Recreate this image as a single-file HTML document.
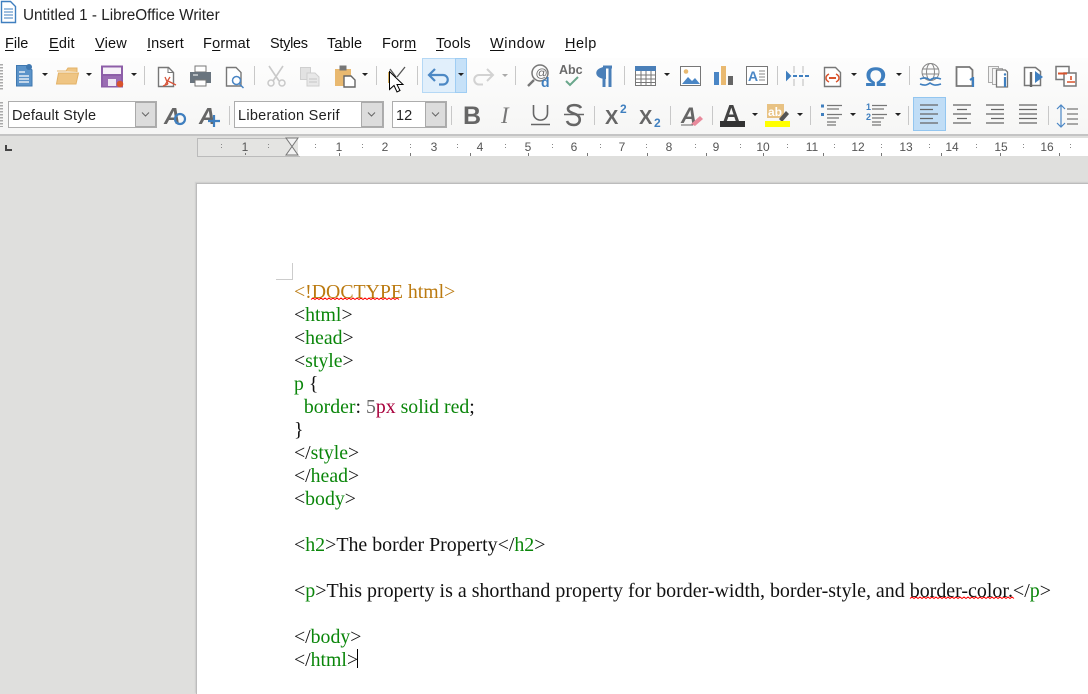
<!DOCTYPE html>
<html><head><meta charset="utf-8">
<style>
html,body{margin:0;padding:0}
body{width:1088px;height:693px;overflow:hidden;position:relative;background:#dfdfdd;font-family:"Liberation Sans",sans-serif}
.a{position:absolute;white-space:pre}
.m{position:absolute;top:35px;font-size:14.5px;line-height:18px;color:#111;white-space:pre}
.m u{text-underline-offset:2px}
.l{position:absolute;left:294px;font:19.8px/23px "Liberation Serif",serif;color:#111;white-space:pre}
.g{color:#0a860a}.o{color:#bb7a10}.c{color:#a8003c}.y{color:#666}
.r{position:absolute;top:140px;font-size:12px;line-height:14px;color:#555;width:24px;text-align:center}
</style></head><body>
<div class="a" style="left:0;top:0;width:1088px;height:134px;background:#fff"></div>
<div class="a" style="left:0;top:58px;width:1088px;height:76px;background:linear-gradient(#fdfdfd,#f6f6f5)"></div>
<div class="a" style="left:0;top:134px;width:1088px;height:2px;background:#c4c4c4"></div>
<div class="a" style="left:197px;top:138px;width:101px;height:17px;background:#e4e4e2;border:1px solid #bbb;box-sizing:content-box"></div>
<div class="a" style="left:298px;top:138px;width:790px;height:18px;background:#fff"></div>
<div class="a" style="left:196px;top:183px;width:892px;height:510px;background:#fff;border-left:1px solid #bcbcbc;border-top:1px solid #bcbcbc;box-shadow:-1px -1px 1px #ccc"></div>

<svg class="a" style="left:0;top:0" width="1088" height="693" viewBox="0 0 1088 693" fill="none">
<!-- title icon -->
<path d="M1.500 1.500h9l5 5v16h-14z" fill="#fff" stroke="#3f7fbf" stroke-width="1.400"/><path d="M4 9h9M4 12h9M4 15h9M4 18h9" stroke="#3f7fbf"/>
<!-- grips -->
<path d="M1.500 64v26M1.500 102v25" stroke="#aaa" stroke-width="3" stroke-dasharray="1.500 1.500"/>
<!-- separators -->
<g stroke="#c8c8c8"><path d="M144.500 66v19M254.500 66v19M376.500 66v19M417.500 66v19M515.500 66v19M624.500 66v19M777.500 66v19M909.500 66v19M229.500 106v19M451.500 106v19M594.500 106v19M670.500 106v19M712.500 106v19M810.500 106v19M908.500 106v19M1048.500 106v19"/></g>
<!-- arrows -->
<g fill="#222"><path d="M42 73h6l-3 3zM86 73h6l-3 3zM131 73h6l-3 3zM362 73h6l-3 3zM664 73h6l-3 3zM851 73h6l-3 3zM896 73h6l-3 3zM752 113h6l-3 3zM797 113h6l-3 3zM850 113h6l-3 3zM895 113h6l-3 3z"/></g>
<path d="M502 74h6l-3 3z" fill="#aaa"/>
<!-- new doc -->
<path d="M16.500 65.500h11l4.500 4.500v16h-15.500z" fill="#5b93c9" stroke="#3f78b0"/><circle cx="29" cy="67" r="3" fill="#3f78b0"/><path d="M19 72h6M19 76h10M19 79h10M19 82h10" stroke="#fff" stroke-width="1.300"/>
<!-- open -->
<path d="M57 71h9l2-3h9v4M56.500 84l2-11h20l-2.500 11z" fill="#efc583" stroke="#e3b267"/>
<!-- save -->
<path d="M102 66.500h20v20h-20z" fill="#f6f1f8" stroke="#8d5ea8" stroke-width="2"/><path d="M103 74h18v2h-18z" fill="#8d5ea8"/><path d="M103 76h18v10h-18z" fill="#9a6cb3"/><path d="M108 79h8v7h-8z" fill="#efe8f3"/><circle cx="120" cy="84" r="3.300" fill="#d9532c"/>
<!-- pdf -->
<path d="M158.500 67.500h10l5 5v14h-15z" fill="#fff" stroke="#777" stroke-width="1.400"/><path d="M168 67.500v5h5" stroke="#777"/><path d="M165 77l3 7M168 84l-5 2M168 81l8 4M170 77l-5 8" stroke="#d8553a" stroke-width="1.300"/>
<!-- print -->
<path d="M195 66h11v6h-11z" fill="#fff" stroke="#777"/><path d="M190 72h21v11h-21z" fill="#69747e" /><path d="M195 80h11v6h-11z" fill="#fff" stroke="#777"/><path d="M193 75h5" stroke="#fff"/>
<!-- preview -->
<path d="M226.500 67.500h9.500l5 5v13.500h-14.500z" fill="#fff" stroke="#777" stroke-width="1.400"/><circle cx="236.500" cy="80.500" r="4" fill="#fff" stroke="#4a86c5" stroke-width="1.500"/><path d="M239.500 84l4 4" stroke="#4a86c5" stroke-width="1.500"/>
<!-- cut -->
<path d="M269 66l10 15M283 66l-10 15" stroke="#c9c9c9" stroke-width="1.600"/><circle cx="271" cy="83" r="3" stroke="#c9c9c9" stroke-width="1.500"/><circle cx="282" cy="83" r="3" stroke="#c9c9c9" stroke-width="1.500"/>
<!-- copy -->
<path d="M300.500 67.500h10v12h-10z" fill="#e2e2e2" stroke="#cfcfcf"/><path d="M307 73h8l4 4v9h-12z" fill="#e8e8e8" stroke="#cfcfcf"/><path d="M309 79h8M309 82h8" stroke="#c6c6c6"/>
<!-- paste -->
<path d="M335 69h16v17h-16z" fill="#e9b970"/><path d="M340 66h6v4h-6z" fill="#777" stroke="#777"/><path d="M344 76h7l4 4v7h-11z" fill="#fff" stroke="#666" stroke-width="1.400"/>
<!-- clone brush under cursor -->
<path d="M390 69l6 8M405 67l-8 10" stroke="#555" stroke-width="1.300"/><path d="M389 72v11" stroke="#d8b060" stroke-width="2"/>
<!-- undo highlight -->
<rect x="422.500" y="58.500" width="44" height="34" fill="#e1effb" stroke="#b5d8f5"/><rect x="455.500" y="58.500" width="11" height="34" fill="#c6e1f8" stroke="#9fcdf3"/>
<path d="M458 73h6l-3 3z" fill="#222"/>
<path d="M429 75h14a4.750 4.750 0 0 1 0 9.500h-4M435 69l-6 6 6 6" stroke="#4c88c4" stroke-width="2.200"/>
<path d="M493 75h-14a4.750 4.750 0 0 0 0 9.500h4M487 69l6 6-6 6" stroke="#d2d2d2" stroke-width="2"/>
<!-- find -->
<circle cx="540" cy="73" r="8" stroke="#777" stroke-width="1.500"/><path d="M534 80l-6 6" stroke="#777" stroke-width="2.400"/><text x="535.500" y="77" font-size="12" fill="#666" font-family="Liberation Sans">@</text><text x="541" y="87" font-size="14" font-weight="bold" fill="#3f7fbf" font-family="Liberation Sans">d</text>
<!-- abc -->
<text x="559" y="74" font-size="12.500" font-weight="bold" fill="#6a6a6a" font-family="Liberation Sans">Abc</text><path d="M566 81l4 4 8-8" stroke="#6aa78c" stroke-width="2"/>
<!-- pilcrow -->
<path d="M603 67h9M604 67v20M610 67v20" stroke="#4a7fb8" stroke-width="3"/><path d="M606 67c-13 0-13 12 0 12z" fill="#4a7fb8"/>
<!-- table -->
<rect x="635.500" y="66.500" width="20" height="19" fill="#fff" stroke="#777"/><rect x="635" y="66" width="21" height="5" fill="#4a7fb8"/><path d="M636 75h19M636 79h19M636 82.500h19M641 71v14M646 71v14M651 71v14" stroke="#777"/>
<!-- image -->
<rect x="680.500" y="66.500" width="20" height="19" fill="#fff" stroke="#777"/><circle cx="686" cy="71.500" r="2.300" fill="#e9b970"/><path d="M682 84l6-7 4 4 3-3 5 6z" fill="#4a86c5"/>
<!-- chart -->
<path d="M714 72h5v13h-5z" fill="#4a86c5"/><path d="M721 66h5v19h-5z" fill="#e9b970"/><path d="M728 76h5v9h-5z" fill="#666"/>
<!-- textbox -->
<rect x="746.500" y="66.500" width="21" height="18" fill="#fff" stroke="#777"/><text x="748" y="81" font-size="14" font-weight="bold" fill="#4a86c5" font-family="Liberation Sans">A</text><path d="M759 71h6M759 74h6M759 77h6M759 80h6" stroke="#888"/>
<!-- break/field -->
<path d="M787 76h3M787 73v6l3-3z M793 76h4M799 76h4M805 76h4" stroke="#3f7fbf" stroke-width="2"/><path d="M794 66v7M803 66v7M794 79v7M803 79v7" stroke="#bbb"/>
<path d="M824.500 67.500h11l5 5v14h-16z" fill="#fff" stroke="#777" stroke-width="1.400"/><path d="M829 74c-4 2-4 6 0 8M836 74c4 2 4 6 0 8" stroke="#d9532c" stroke-width="1.500"/><path d="M829 78h7" stroke="#d9532c" stroke-width="2"/>
<!-- omega -->
<text x="865" y="86" font-size="27" font-weight="bold" fill="#3f7fbf" font-family="Liberation Sans">Ω</text>
<!-- hyperlink -->
<circle cx="930.500" cy="72" r="8.500" stroke="#888"/><ellipse cx="930.500" cy="72" rx="4" ry="8.500" stroke="#888"/><path d="M922 69h17M922 74h17" stroke="#888"/><path d="M920 79c5-2 7-1 10 1 3-2 5-3 11-1M920 84c5 2 7 1 10-1 3 2 5 3 11 1" stroke="#3f7fbf" stroke-width="1.600"/>
<!-- footnote -->
<path d="M956.500 67h13l3 3v16h-16z" fill="#fff" stroke="#777" stroke-width="1.800"/><path d="M973 77v10M970 80l3-2" stroke="#3f7fbf" stroke-width="2.200"/>
<!-- endnote -->
<path d="M988.500 66.500h10v16h-10z" fill="#f3f3f3" stroke="#aaa"/><path d="M992.500 68.500h10v16h-10z" fill="#f6f6f6" stroke="#aaa"/><path d="M996.500 70h9l2 2v15h-11z" fill="#fff" stroke="#777" stroke-width="1.300"/><path d="M1005 77v10" stroke="#3f7fbf" stroke-width="2.200"/><circle cx="1005" cy="74.500" r="1.200" fill="#3f7fbf"/>
<!-- bookmark -->
<path d="M1024.500 67.500h11l5 4v14h-16z" fill="#fff" stroke="#777" stroke-width="1.500"/><path d="M1031 72v15" stroke="#666" stroke-width="2.400"/><path d="M1035 71l8 6-8 6z" fill="#3f7fbf"/>
<!-- cross ref -->
<path d="M1056 66.500h13v13h-13z" fill="#fff" stroke="#777" stroke-width="1.500"/><path d="M1064 73h12v13h-12z" fill="#fff" stroke="#777" stroke-width="1.500"/><path d="M1058 73.500h9" stroke="#d9532c" stroke-width="2"/><path d="M1067 82h8M1071 76v4" stroke="#d9532c" stroke-width="1.600"/>

<!-- combo boxes -->
<rect x="8.500" y="101.500" width="148" height="26" fill="#fff" stroke="#adadad"/>
<rect x="135.500" y="102.500" width="20" height="24" fill="#dcdcdc" stroke="#aaa"/>
<rect x="234.500" y="101.500" width="149" height="26" fill="#fff" stroke="#adadad"/>
<rect x="361.500" y="102.500" width="21" height="24" fill="#dcdcdc" stroke="#aaa"/>
<rect x="392.500" y="101.500" width="54" height="26" fill="#fff" stroke="#adadad"/>
<rect x="425.500" y="102.500" width="20" height="24" fill="#dcdcdc" stroke="#aaa"/>
<path d="M142 112.500l3.500 3.500 3.500-3.500M368 112.500l3.500 3.500 3.500-3.500M432 112.500l3.500 3.500 3.500-3.500" stroke="#666"/>
<!-- style icons -->
<text x="164" y="124" font-size="23" font-weight="bold" font-style="italic" fill="#666" font-family="Liberation Sans">A</text><circle cx="180" cy="119" r="5" stroke="#3f7fbf" stroke-width="2.200"/>
<text x="199" y="124" font-size="23" font-weight="bold" font-style="italic" fill="#666" font-family="Liberation Sans">A</text><path d="M208 121h12M214 115v12" stroke="#3f7fbf" stroke-width="2.200"/>
<!-- B I U S -->
<text x="463" y="124" font-size="25" font-weight="bold" fill="#666" font-family="Liberation Sans">B</text>
<text x="501" y="123" font-size="23" font-style="italic" fill="#777" font-family="Liberation Serif">I</text>
<path d="M533.500 105v8c0 9.500 14 9.500 14 0v-8" stroke="#666" stroke-width="1.600"/><path d="M531 124.500h19" stroke="#666" stroke-width="1.500"/>
<path d="M581 108c-2-4-13-4-13 1 0 3 5 4 7 5 7 2 6 11-1 11-3 0-6-1-7-4" stroke="#666" stroke-width="2.600"/><path d="M564 114.500h20" stroke="#666" stroke-width="1.400"/>
<!-- sup/sub -->
<text x="605" y="124" font-size="20" font-weight="bold" fill="#666" font-family="Liberation Sans">X</text><text x="620" y="113" font-size="12" font-weight="bold" fill="#3f7fbf" font-family="Liberation Sans">2</text>
<text x="639" y="124" font-size="20" font-weight="bold" fill="#666" font-family="Liberation Sans">X</text><text x="654" y="127" font-size="12" font-weight="bold" fill="#3f7fbf" font-family="Liberation Sans">2</text>
<!-- clear -->
<text x="681" y="123" font-size="22" font-weight="bold" font-style="italic" fill="#666" font-family="Liberation Sans">A</text><path d="M691 124l9-8 3 3-8 7z" fill="#e88a9c"/><path d="M681 125h12" stroke="#666"/>
<!-- font colour -->
<text x="723" y="121" font-size="23" font-weight="bold" fill="#444" font-family="Liberation Sans">A</text><rect x="720" y="121" width="25" height="6" fill="#333"/>
<!-- highlight -->
<rect x="767" y="104" width="17" height="14" fill="#e8c283"/><text x="768" y="116" font-size="12" font-weight="bold" fill="#fff" font-family="Liberation Sans">ab</text><path d="M779 119l7-8 3 3-7 8z" fill="#555"/><rect x="765" y="121" width="25" height="6" fill="#ffff00"/>
<!-- bullets -->
<path d="M821 104.500h3v3h-3zM821 113h3v3h-3z" fill="#3f7fbf"/><path d="M827 105.500h15M827 109h12M827 114.500h15M827 118h12M827 122h9M827 125h9" stroke="#777" stroke-width="1.200"/>
<text x="866" y="110" font-size="9" font-weight="bold" fill="#3f7fbf" font-family="Liberation Sans">1</text><text x="866" y="120" font-size="9" font-weight="bold" fill="#3f7fbf" font-family="Liberation Sans">2</text><path d="M872 105.500h15M872 109h12M872 114.500h15M872 118h12M872 122h9M872 125h9" stroke="#777" stroke-width="1.200"/>
<!-- align -->
<rect x="913.500" y="97.500" width="32" height="33" fill="#c0ddf6" stroke="#93c6f0"/>
<path d="M920 105h18M920 109.500h13M920 114h18M920 118.500h13M920 123h18M953 105h18M957 109.500h10M953 114h18M957 118.500h10M953 123h18M986 105h18M991 109.500h13M986 114h18M991 118.500h13M986 123h18M1019 105h18M1019 109.500h18M1019 114h18M1019 118.500h18M1019 123h18" stroke="#666" stroke-width="1.200"/>
<path d="M1061 106v20M1057 109l4-4 4 4M1057 123l4 4 4-4" stroke="#4a86c5" stroke-width="1.200"/><path d="M1067 109h11M1067 114h11M1067 119h11M1067 124h11" stroke="#777" stroke-width="1.200"/>
<!-- ruler -->
<path d="M6 145v5h6" stroke="#444" stroke-width="2"/>
<path d="M286 138h12l-12 17h12z" fill="#f2f2f2" stroke="#777"/>
<path d="M221.500 144v5M268.500 144v5M315.500 144v5M362.500 144v5M410.500 144v5M457.500 144v5M505.500 144v5M552.500 144v5M600.500 144v5M646.500 144v5M695.500 144v5M740.500 144v5M787.500 144v5M834.500 144v5M881.500 144v5M929.500 144v5M976.500 144v5M1023.500 144v5M1070.500 144v5" stroke="#888" stroke-dasharray="1 2"/>
<path d="M339.500 153v3M410.500 153v3M470.500 153v3M528.500 153v3M587.500 153v3M647.500 153v3M706.500 153v3M763.500 153v3M823.500 153v3M881.500 153v3M941.500 153v3M1000.500 153v3M1059.500 153v3M245.500 153v2" stroke="#777"/>
<!-- crop mark -->
<path d="M292.500 263v16.500H276" stroke="#ccc"/>
<!-- squiggles -->
<path d="M311 299.500l2 -1.500 2 1.500 2 -1.500 2 1.500 2 -1.500 2 1.500 2 -1.500 2 1.500 2 -1.500 2 1.500 2 -1.500 2 1.500 2 -1.500 2 1.500 2 -1.500 2 1.500 2 -1.500 2 1.500 2 -1.500 2 1.500 2 -1.500 2 1.500 2 -1.500 2 1.500 2 -1.500 2 1.500 2 -1.500 2 1.500 2 -1.500 2 1.500 2 -1.500 2 1.500 2 -1.500 2 1.500 2 -1.500 2 1.500 2 -1.500 2 1.500 2 -1.500 2 1.500 2 -1.500 2 1.500 2 -1.500 2 1.500" stroke="#f00" stroke-width="1"/>
<path d="M910 598.500l2 -1.500 2 1.500 2 -1.500 2 1.500 2 -1.500 2 1.500 2 -1.500 2 1.500 2 -1.500 2 1.500 2 -1.500 2 1.500 2 -1.500 2 1.500 2 -1.500 2 1.500 2 -1.500 2 1.500 2 -1.500 2 1.500 2 -1.500 2 1.500 2 -1.500 2 1.500 2 -1.500 2 1.500 2 -1.500 2 1.500 2 -1.500 2 1.500 2 -1.500 2 1.500 2 -1.500 2 1.500 2 -1.500 2 1.500 2 -1.500 2 1.500 2 -1.500 2 1.500 2 -1.500 2 1.500 2 -1.500 2 1.500 2 -1.500 2 1.500 2 -1.500 2 1.500 2 -1.500 2 1.500 2 -1.500 2 1.500" stroke="#f00" stroke-width="1"/>
<!-- text cursor -->
<path d="M357.500 649v19" stroke="#000"/>
<!-- mouse -->
<path d="M389.500 71.500v18l4.500-4 3 6.500 3-1.500-3-6h6z" fill="#fff" stroke="#000"/>
</svg>

<div class="a" style="left:23px;top:7px;font-size:15.300px;line-height:18px;color:#222">Untitled 1 - LibreOffice Writer</div>
<div class="m" style="left:5px"><u>F</u>ile</div>
<div class="m" style="left:49px;letter-spacing:.2px"><u>E</u>dit</div>
<div class="m" style="left:95px;letter-spacing:.2px"><u>V</u>iew</div>
<div class="m" style="left:147px;letter-spacing:.1px"><u>I</u>nsert</div>
<div class="m" style="left:203px;letter-spacing:.2px">F<u>o</u>rmat</div>
<div class="m" style="left:270px;letter-spacing:-.3px">St<u>y</u>les</div>
<div class="m" style="left:327px;letter-spacing:.1px">T<u>a</u>ble</div>
<div class="m" style="left:382px;letter-spacing:.1px">For<u>m</u></div>
<div class="m" style="left:436px;letter-spacing:.2px"><u>T</u>ools</div>
<div class="m" style="left:490px;letter-spacing:.6px"><u>W</u>indow</div>
<div class="m" style="left:565px;letter-spacing:.5px"><u>H</u>elp</div>

<div class="a" style="left:12px;top:107px;font-size:14.500px;line-height:18px;color:#222;letter-spacing:.15px">Default Style</div>
<div class="a" style="left:238px;top:107px;font-size:14.500px;line-height:18px;color:#222;letter-spacing:.27px">Liberation Serif</div>
<div class="a" style="left:396px;top:107px;font-size:14.500px;line-height:18px;color:#222">12</div>

<div class="r" style="left:233px">1</div>
<div class="r" style="left:327px">1</div><div class="r" style="left:373px">2</div><div class="r" style="left:422px">3</div><div class="r" style="left:468px">4</div><div class="r" style="left:516px">5</div><div class="r" style="left:562px">6</div><div class="r" style="left:610px">7</div><div class="r" style="left:657px">8</div><div class="r" style="left:704px">9</div><div class="r" style="left:751px">10</div><div class="r" style="left:800px">11</div><div class="r" style="left:846px">12</div><div class="r" style="left:894px">13</div><div class="r" style="left:940px">14</div><div class="r" style="left:989px">15</div><div class="r" style="left:1035px">16</div>

<div class="l o" style="top:281px">&lt;!DOCTYPE html&gt;</div>
<div class="l" style="top:304px">&lt;<span class="g">html</span>&gt;</div>
<div class="l" style="top:327px">&lt;<span class="g">head</span>&gt;</div>
<div class="l" style="top:350px">&lt;<span class="g">style</span>&gt;</div>
<div class="l" style="top:373px"><span class="g">p</span> {</div>
<div class="l" style="top:396px">  <span class="g">border</span>: <span class="y">5</span><span class="c">px</span><span class="g"> solid red</span>;</div>
<div class="l" style="top:419px">}</div>
<div class="l" style="top:442px">&lt;/<span class="g">style</span>&gt;</div>
<div class="l" style="top:465px">&lt;/<span class="g">head</span>&gt;</div>
<div class="l" style="top:488px">&lt;<span class="g">body</span>&gt;</div>
<div class="l" style="top:534px;font-size:19.9px">&lt;<span class="g">h2</span>&gt;The border Property&lt;/<span class="g">h2</span>&gt;</div>
<div class="l" style="top:580px;font-size:19.97px">&lt;<span class="g">p</span>&gt;This property is a shorthand property for border-width, border-style, and border-color.&lt;/<span class="g">p</span>&gt;</div>
<div class="l" style="top:626px">&lt;/<span class="g">body</span>&gt;</div>
<div class="l" style="top:649px">&lt;/<span class="g">html</span>&gt;</div>
</body></html>
